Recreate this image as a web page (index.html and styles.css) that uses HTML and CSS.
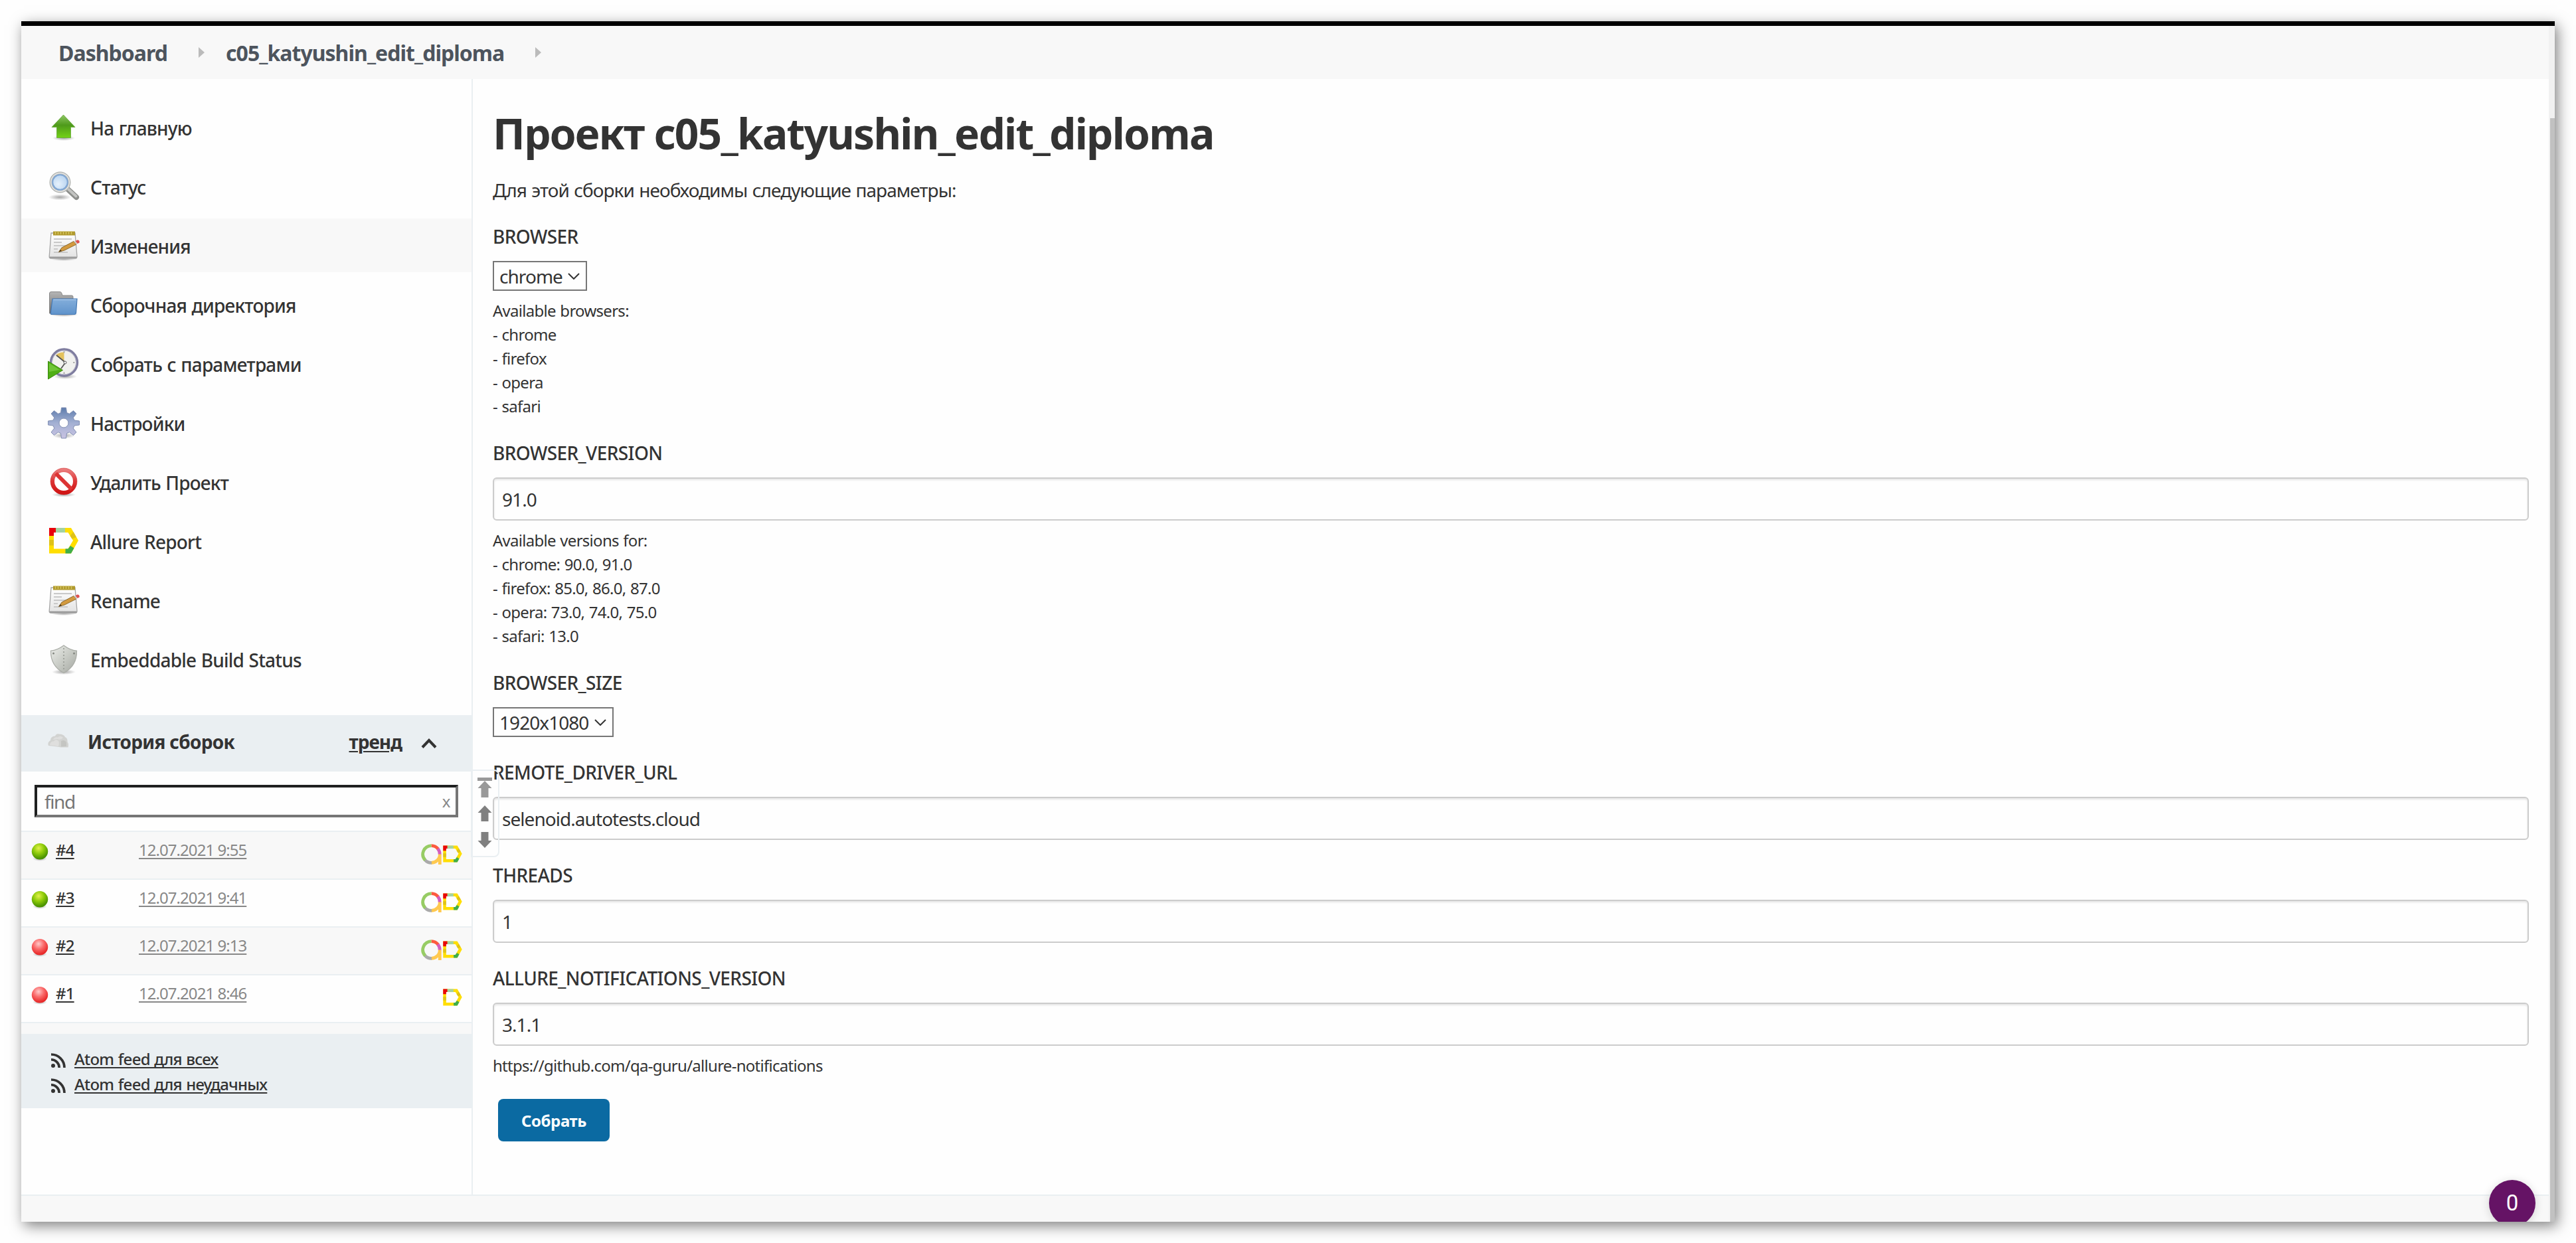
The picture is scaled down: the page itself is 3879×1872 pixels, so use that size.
FILE: index.html
```html
<!DOCTYPE html>
<html lang="ru">
<head>
<meta charset="utf-8">
<title>c05_katyushin_edit_diploma</title>
<link rel="stylesheet" href="styles.css">
</head>
<body>
<svg class="sprite" aria-hidden="true">
  <defs>
    <linearGradient id="g-green" x1="0" y1="0" x2="0" y2="1"><stop offset="0" stop-color="#8fc765"/><stop offset=".45" stop-color="#4e9a1a"/><stop offset="1" stop-color="#73d216"/></linearGradient>
    <linearGradient id="g-blue" x1="0" y1="0" x2="0" y2="1"><stop offset="0" stop-color="#84aedb"/><stop offset="1" stop-color="#5f93cb"/></linearGradient>
    <linearGradient id="g-gray" x1="0" y1="0" x2="0" y2="1"><stop offset="0" stop-color="#b5b5b5"/><stop offset="1" stop-color="#6c6c6c"/></linearGradient>
    <linearGradient id="g-paper" x1="0" y1="0" x2="0" y2="1"><stop offset="0" stop-color="#ffffff"/><stop offset="1" stop-color="#e2e2e2"/></linearGradient>
    <linearGradient id="g-gear" x1="0" y1="0" x2="0" y2="1"><stop offset="0" stop-color="#5c7bab"/><stop offset=".5" stop-color="#a3b0d3"/><stop offset="1" stop-color="#c9c3e2"/></linearGradient>
    <linearGradient id="g-stop" x1="0" y1="0" x2="0" y2="1"><stop offset="0" stop-color="#ea7a7a"/><stop offset=".5" stop-color="#dc3535"/><stop offset="1" stop-color="#d01515"/></linearGradient>
    <linearGradient id="g-shield" x1="0" y1="0" x2="1" y2="1"><stop offset="0" stop-color="#eceeea"/><stop offset=".5" stop-color="#c9ccc6"/><stop offset="1" stop-color="#a3a6a0"/></linearGradient>
    <radialGradient id="g-lens" cx=".4" cy=".6" r=".7"><stop offset="0" stop-color="#e6f1fc"/><stop offset="1" stop-color="#a9caec"/></radialGradient>
    <radialGradient id="g-ok" cx=".42" cy=".3" r=".65"><stop offset="0" stop-color="#e2f04c"/><stop offset=".5" stop-color="#8fcc0a"/><stop offset="1" stop-color="#4a9200"/></radialGradient>
    <radialGradient id="g-fail" cx=".42" cy=".3" r=".65"><stop offset="0" stop-color="#ffc9c9"/><stop offset=".5" stop-color="#fa6b6b"/><stop offset="1" stop-color="#e82a2a"/></radialGradient>
    <radialGradient id="g-shadow"><stop offset="0" stop-color="#000" stop-opacity=".35"/><stop offset="1" stop-color="#000" stop-opacity="0"/></radialGradient>
  </defs>
  <symbol id="i-up" viewBox="0 0 48 48">
    <ellipse cx="24" cy="40" rx="17" ry="4" fill="url(#g-shadow)"/>
    <path d="M23.500 5 41 23.500H34.500V39.500H13.500V23.500H6Z" fill="url(#g-green)" stroke="#5aa02c" stroke-width="1" stroke-opacity=".7"/>
  </symbol>
  <symbol id="i-search" viewBox="0 0 48 48">
    <ellipse cx="18" cy="40" rx="17" ry="4.500" fill="url(#g-shadow)"/>
    <path d="M29 27 43 40" stroke="#8d8f8c" stroke-width="8" stroke-linecap="round"/>
    <path d="M30 27 42.500 38.500" stroke="#c3c4c2" stroke-width="4" stroke-linecap="round"/>
    <circle cx="18.500" cy="17.500" r="14" fill="url(#g-lens)" stroke="#b4b6b3" stroke-width="4"/>
    <circle cx="18.500" cy="17.500" r="13.800" fill="none" stroke="#e8e8e6" stroke-width="1.500"/>
    <circle cx="18.500" cy="17.500" r="11.300" fill="none" stroke="#7fa6d4" stroke-width="2"/>
  </symbol>
  <symbol id="i-notepad" viewBox="0 0 48 48">
    <ellipse cx="24" cy="44" rx="20" ry="3" fill="url(#g-shadow)"/>
    <path d="M5 5H41L44 40Q44 43 42 43H4Q2 43 2.200 40Z" fill="url(#g-paper)" stroke="#a5a5a5" stroke-width="1.300"/>
    <path d="M2.500 40.500H43.500V43H3Z" fill="#9c9c9c"/>
    <path d="M8 2.500H41V8.500H8Z" fill="#b19a2e"/>
    <path d="M11.500 2V7M15.500 2V7M19.500 2V7M23.500 2V7M27.500 2V7M31.500 2V7M35.500 2V7" stroke="#d6c765" stroke-width="1.300"/>
    <path d="M9 14H36M9 19H21M9 24H33M9 29H15M9 34H30" stroke="#c9c9c9" stroke-width="1.800"/>
    <path d="M16.500 33.500 21 27 39 17.500 43 22 25 31Z" fill="#d39a3f" stroke="#8c6a2c" stroke-width="1"/>
    <path d="M16.500 33.500 19 30 21 32Z" fill="#4b3a22"/>
    <path d="M41.500 17 44.500 21 47.500 19.500Q48.500 16 45 15.300Z" fill="#df5050"/>
    <path d="M39.300 17.800 42.800 22 44.500 21 41.500 17Z" fill="#c9c9c9"/>
  </symbol>
  <symbol id="i-folder" viewBox="0 0 48 48">
    <ellipse cx="24" cy="39" rx="22" ry="3" fill="url(#g-shadow)"/>
    <path d="M2.500 37V7Q2.500 4.500 5 4.500H18Q20.500 4.500 21 7L22 10H36Q38 10 38 12V37Z" fill="url(#g-gray)" stroke="#888" stroke-width="1"/>
    <path d="M7 15H44L42.500 36Q42.300 38.500 40 38.500H6Q4 38.500 4.400 36Z" fill="url(#g-blue)" stroke="#4478b4" stroke-width="1.200"/>
    <path d="M8.300 16.500H42.500" stroke="#b4d0ee" stroke-width="1"/>
  </symbol>
  <symbol id="i-clock" viewBox="0 0 48 48">
    <ellipse cx="26" cy="43" rx="18" ry="4" fill="url(#g-shadow)"/>
    <circle cx="24.500" cy="22" r="19.700" fill="#f1f1ee" stroke="#7f7d9f" stroke-width="4"/>
    <circle cx="24.500" cy="22" r="18" fill="none" stroke="#c9c8d6" stroke-width="1"/>
    <path d="M12 11Q17 6 24.500 6.500V20Z" fill="#e3c25d"/>
    <path d="M13 11 26.500 22 20 31" fill="none" stroke="#555" stroke-width="1.800"/>
    <circle cx="26" cy="22" r="2" fill="#fff" stroke="#555"/>
    <path d="M24.500 5V7.500M40.500 22H38M24.500 39V36.500" stroke="#999" stroke-width="1.500"/>
    <path d="M.500 20 22.500 33.500.500 47Z" fill="#4fae14" stroke="#3c8a10" stroke-width="1"/>
    <path d="M2 23 18 33 2 36Z" fill="#7dce45" opacity=".7"/>
  </symbol>
  <symbol id="i-gear" viewBox="0 0 48 48">
    <ellipse cx="24" cy="43" rx="17" ry="4.500" fill="url(#g-shadow)"/>
    <path d="M20.500 1H27.500L28.500 8.500 32.500 10.200 38.500 5.500 43 10 38.200 16 40 20 47.500 21V27L40 28 38.200 32 43 38 38.500 42.500 32.500 37.800 28.500 39.500 27.500 47H20.500L19.500 39.500 15.500 37.800 9.500 42.500 5 38 9.800 32 8 28 .500 27V21L8 20 9.800 16 5 10 9.500 5.500 15.500 10.200 19.500 8.500ZM24 17A7 7 0 1 0 24 31A7 7 0 1 0 24 17Z" fill="url(#g-gear)" fill-rule="evenodd" stroke="#8290b4" stroke-width="1" stroke-linejoin="round"/>
  </symbol>
  <symbol id="i-stop" viewBox="0 0 48 48">
    <ellipse cx="24" cy="43" rx="18" ry="3.500" fill="url(#g-shadow)"/>
    <circle cx="24" cy="23" r="17" fill="#fff" stroke="url(#g-stop)" stroke-width="6"/>
    <path d="M12 11 36 35" stroke="#dc3434" stroke-width="6"/>
    <circle cx="24" cy="23" r="20" fill="none" stroke="#c22" stroke-width=".8" opacity=".6"/>
  </symbol>
  <symbol id="i-allure" viewBox="0 0 48 48">
    <path d="M2 4H35L46 23 35 42.500H2ZM9 11V35.500H30.500L38 23 30.500 11Z" fill="#ffde00" fill-rule="evenodd"/>
    <path d="M2 4H12V11H9V16H2Z" fill="#e8000b"/>
    <path d="M12 4H26V11H12Z" fill="#a3d3a1"/>
    <path d="M33.500 16 38.500 10 43 18 36.500 20.500Z" fill="#dfc219"/>
    <path d="M2 22H9V30.500H2Z" fill="#dfc219"/>
    <path d="M26.500 35.500H30.500L34 31 39.500 34.500 35 42.500H26.500Z" fill="#3fae49"/>
  </symbol>
  <symbol id="i-testops" viewBox="0 0 30 30">
    <g fill="none" stroke-width="4.600">
      <path d="M15 2.500A12.500 12.500 0 0 1 25 7.500" stroke="#fd5a3e"/>
      <path d="M24.500 7A12.500 12.500 0 0 1 27.300 15.500" stroke="#d35ebe"/>
      <path d="M27.400 15V30M27.400 15A12.500 12.500 0 0 1 14.500 27.500" stroke="#ffc94f"/>
      <path d="M15.500 27.500A12.500 12.500 0 0 1 5.500 23" stroke="#aaa"/>
      <path d="M6 23.500A12.500 12.500 0 0 1 15 2.500" stroke="#97cc64"/>
    </g>
  </symbol>
  <symbol id="i-shield" viewBox="0 0 48 48">
    <ellipse cx="24" cy="43" rx="18" ry="4" fill="url(#g-shadow)"/>
    <path d="M24 3Q34 10.500 43.500 11 44 34 24 44.500 4 34 4.500 11 14 10.500 24 3Z" fill="url(#g-shield)" stroke="#a9aca6" stroke-width="1.200"/>
    <path d="M24 7V41" stroke="#969993" stroke-width="1.600" stroke-dasharray="2 3"/>
    <circle cx="8.500" cy="15" r="1.500" fill="#858882"/><circle cx="39.500" cy="15" r="1.500" fill="#858882"/>
  </symbol>
  <symbol id="i-weather" viewBox="0 0 32 24">
    <path d="M1 19Q-1 14 4 11 4 5 11 4.500 13 0 17 1.500 24 1.500 26 6 30 8 29.500 13 32 17 30.500 21.500L20 21.500 10 20 1 19Z" fill="#d2d3d1"/>
    <path d="M3 18Q4 12 9 12.500 11 9 15 11 18 13 16 20Q10 19 3 18Z" fill="#dfdfde"/>
    <path d="M8 10Q10 5.500 15 6.500 19 3 23 7 20 11 14 9Z" fill="#dededd"/>
    <path d="M20 20.500V12Q25 9 28 14V20Z" fill="#c4c5c2"/>
  </symbol>
  <symbol id="i-ok" viewBox="0 0 26 28"><ellipse cx="13" cy="24" rx="11" ry="4" fill="url(#g-shadow)"/><circle cx="13" cy="13.300" r="12.200" fill="url(#g-ok)"/></symbol>
  <symbol id="i-fail" viewBox="0 0 26 28"><ellipse cx="13" cy="24" rx="11" ry="4" fill="url(#g-shadow)"/><circle cx="13" cy="13.300" r="12.200" fill="url(#g-fail)"/></symbol>
  <symbol id="i-rss" viewBox="0 0 22 22">
    <circle cx="3" cy="19" r="3" fill="#333"/>
    <path d="M0 9.800A12.200 12.200 0 0 1 12.200 22M0 2A20 20 0 0 1 20 22" fill="none" stroke="#333" stroke-width="3.600"/>
  </symbol>
  <symbol id="i-move" viewBox="0 0 22 24"><path d="M11 0 21.500 11H16.500V24H5.500V11H.500Z"/></symbol>
</svg>

<div class="window">
  <nav class="breadcrumbs">
    <a>Dashboard</a><svg class="sep first" viewBox="0 0 9 16"><path d="M0 0 9 8 0 16Z" fill="#bbb"/></svg>
    <a>c05_katyushin_edit_diploma</a><svg class="sep" viewBox="0 0 9 16"><path d="M0 0 9 8 0 16Z" fill="#bbb"/></svg>
  </nav>

  <div class="page">
    <aside class="side">
      <ul class="tasks">
        <li><svg><use href="#i-up"/></svg><a>На главную</a></li>
        <li><svg><use href="#i-search"/></svg><a>Статус</a></li>
        <li class="active"><svg><use href="#i-notepad"/></svg><a>Изменения</a></li>
        <li><svg><use href="#i-folder"/></svg><a>Сборочная директория</a></li>
        <li><svg><use href="#i-clock"/></svg><a>Собрать с параметрами</a></li>
        <li><svg><use href="#i-gear"/></svg><a>Настройки</a></li>
        <li><svg><use href="#i-stop"/></svg><a>Удалить Проект</a></li>
        <li><svg><use href="#i-allure"/></svg><a>Allure Report</a></li>
        <li><svg><use href="#i-notepad"/></svg><a>Rename</a></li>
        <li><svg><use href="#i-shield"/></svg><a>Embeddable Build Status</a></li>
      </ul>

      <section class="history">
        <header class="history-head">
          <svg class="weather"><use href="#i-weather"/></svg>
          <h2>История сборок</h2>
          <a class="trend">тренд</a>
          <svg class="collapse" viewBox="0 0 24 15"><path d="M2 13.500 12 3 22 13.500" fill="none" stroke="#333" stroke-width="4"/></svg>
        </header>
        <div class="find"><span>find</span><span class="clear">x</span></div>
        <ul class="builds">
          <li><svg class="ball"><use href="#i-ok"/></svg><a class="num">#4</a><a class="date">12.07.2021 9:55</a><span class="badges"><svg><use href="#i-testops"/></svg><svg><use href="#i-allure"/></svg></span></li>
          <li><svg class="ball"><use href="#i-ok"/></svg><a class="num">#3</a><a class="date">12.07.2021 9:41</a><span class="badges"><svg><use href="#i-testops"/></svg><svg><use href="#i-allure"/></svg></span></li>
          <li><svg class="ball"><use href="#i-fail"/></svg><a class="num">#2</a><a class="date">12.07.2021 9:13</a><span class="badges"><svg><use href="#i-testops"/></svg><svg><use href="#i-allure"/></svg></span></li>
          <li><svg class="ball"><use href="#i-fail"/></svg><a class="num">#1</a><a class="date">12.07.2021 8:46</a><span class="badges"><svg><use href="#i-allure"/></svg></span></li>
        </ul>
        <div class="feeds">
          <p><svg><use href="#i-rss"/></svg><a>Atom feed для всех</a></p>
          <p><svg><use href="#i-rss"/></svg><a>Atom feed для неудачных</a></p>
        </div>
        <div class="pager">
          <svg class="oldest" viewBox="0 0 22 30"><path d="M0 0H22V5H0ZM11 5 21.500 16H16.500V30H5.500V16H.500Z"/></svg>
          <svg><use href="#i-move"/></svg>
          <svg class="down"><use href="#i-move"/></svg>
        </div>
      </section>
    </aside>

    <main class="main">
      <h1>Проект c05_katyushin_edit_diploma</h1>
      <p class="intro">Для этой сборки необходимы следующие параметры:</p>

      <div class="param">
        <div class="name">BROWSER</div>
        <div class="select">chrome<svg viewBox="0 0 18 10"><path d="M1 1 9 9 17 1" fill="none" stroke="#333" stroke-width="2"/></svg></div>
        <div class="help">Available browsers:<br>- chrome<br>- firefox<br>- opera<br>- safari</div>
      </div>
      <div class="param">
        <div class="name">BROWSER_VERSION</div>
        <div class="field">91.0</div>
        <div class="help">Available versions for:<br>- chrome: 90.0, 91.0<br>- firefox: 85.0, 86.0, 87.0<br>- opera: 73.0, 74.0, 75.0<br>- safari: 13.0</div>
      </div>
      <div class="param">
        <div class="name">BROWSER_SIZE</div>
        <div class="select wide">1920x1080<svg viewBox="0 0 18 10"><path d="M1 1 9 9 17 1" fill="none" stroke="#333" stroke-width="2"/></svg></div>
      </div>
      <div class="param">
        <div class="name">REMOTE_DRIVER_URL</div>
        <div class="field">selenoid.autotests.cloud</div>
      </div>
      <div class="param">
        <div class="name">THREADS</div>
        <div class="field">1</div>
      </div>
      <div class="param">
        <div class="name">ALLURE_NOTIFICATIONS_VERSION</div>
        <div class="field">3.1.1</div>
        <div class="help">https://github.com/qa-guru/allure-notifications</div>
      </div>
      <button class="build" type="button">Собрать</button>
    </main>
  </div>

  <footer class="footer"></footer>
  <div class="scrollbar"><div class="thumb"></div></div>
  <div class="counter">0</div>
</div>
</body>
</html>
```
FILE: styles.css
```css
* { box-sizing: border-box; margin: 0; padding: 0; }

body {
  height: 1872px;
  padding: 32px;
  overflow: hidden;
  background: #fefefe;
  color: #333;
  font: 400 28px/36px "Noto Sans", "Open Sans", sans-serif;
}

ul { list-style: none; }
svg { display: block; flex: none; }
.sprite { position: absolute; width: 0; height: 0; }

.window {
  position: relative;
  display: flex;
  flex-direction: column;
  width: 3815px;
  height: 1808px;
  border-top: 7px solid #000;
  background: #fefefe;
  box-shadow: 4px 6px 20px rgba(0, 0, 0, .5);
}

/* Breadcrumbs */
.breadcrumbs {
  display: flex;
  align-items: center;
  height: 80px;
  padding-left: 56px;
  background: #f8f8f8;
  color: #4d545d;
  font-size: 32px;
  font-weight: 700;
  letter-spacing: -.97px;
}
.breadcrumbs a { padding-top: 2px; }
.breadcrumbs .sep { width: 9px; height: 16px; margin-left: 47px; }
.breadcrumbs .sep.first { margin-right: 32px; }

.page { display: flex; height: 1680px; }

/* Sidebar */
.side {
  width: 680px;
  padding-top: 32px;
  border-right: 2px solid #eaeff2;
  flex: none;
}
.tasks { display: grid; gap: 8px; }
.tasks li {
  display: flex;
  align-items: center;
  gap: 16px;
  height: 81px;
  padding-left: 40px;
  font-weight: 500;
  letter-spacing: -.8px;
  word-spacing: 1px;
}
.tasks a { padding-top: 2px; }
.tasks svg { width: 48px; height: 48px; }
.tasks .active { background: #f8f8f8; }

.history { position: relative; margin-top: 44px; }
.history-head {
  display: flex;
  align-items: center;
  height: 85px;
  margin-right: -2px;
  padding: 0 54px 7px 40px;
  background: #eaeff2;
}
.weather { width: 32px; height: 24px; }
.history-head h2 { margin: 1px 0 0 28px; font-size: 28px; letter-spacing: -.7px; }
.trend { margin: 1px 1px 0 auto; font-weight: 700; letter-spacing: -1px; text-decoration: underline; text-decoration-thickness: 2px; text-underline-offset: 3px; }
.collapse { width: 24px; height: 15px; margin: 7px 0 0 28px; }

.find {
  display: flex;
  justify-content: space-between;
  align-items: center;
  height: 49px;
  margin: 20px 20px 20px 20px;
  padding: 0 9px 0 11px;
  border: 4px solid;
  border-color: #1f2020 #767676 #767676 #1f2020;
  color: #757575;
  letter-spacing: -1.4px;
}
.find span { padding-top: 1px; }
.find .clear { font-size: 24px; color: #888; }

.builds li {
  display: flex;
  align-items: center;
  height: 72px;
  padding: 0 13px 18px 15px;
  border-top: 2px solid #eaeff2;
  font-size: 24px;
}
.builds li:nth-child(odd) { background: #f8f8f8; }
.ball { width: 26px; height: 28px; margin-top: 7px; }
.num { width: 125px; margin: 1px 0 0 11px; font-weight: 500; letter-spacing: -.8px; text-decoration: underline; text-decoration-thickness: 2px; text-underline-offset: 3px; }
.date { margin-top: 1px; color: #888; letter-spacing: -.95px; text-decoration: underline; text-decoration-thickness: 2px; text-underline-offset: 3px; }
.badges { display: flex; align-items: center; gap: 1px; margin: 15px 0 0 auto; }
.badges svg { width: 31px; height: 31px; }

.feeds {
  height: 130px;
  padding: 35px 0 0 45px;
  border-top: 2px solid #eaeff2;
  background: linear-gradient(#f8f8f8 16px, #eaeff2 16px);
}
.feeds p {
  display: flex;
  align-items: center;
  height: 38px;
  gap: 13px;
  font-size: 24px;
  font-weight: 500;
  letter-spacing: -.75px;
  word-spacing: 1px;
}
.feeds a { text-decoration: underline; text-decoration-thickness: 2px; text-underline-offset: 3px; }
.feeds svg { width: 22px; height: 22px; margin-top: 4px; }

/* Paging handle that hangs over the form */
.pager {
  position: absolute;
  top: 82px;
  left: 677px;
  display: flex;
  flex-direction: column;
  align-items: center;
  width: 43px;
  height: 132px;
  padding: 10px 2px 0 0;
  border: 2px solid #eaeff2;
  border-radius: 0 8px 8px 0;
  fill: #808080;
}
.pager svg { width: 22px; height: 24px; margin-bottom: 16px; }
.pager .oldest { height: 30px; margin-bottom: 12px; fill: #999; }
.pager .down { transform: rotate(180deg); }

/* Parameter form */
.main { width: 3126px; padding: 42px 30px 0; }
h1 { font-size: 64px; line-height: 80px; letter-spacing: -1.77px; }
.intro { margin: 27px 0 34px; letter-spacing: -.95px; word-spacing: 1px; }
.param { margin-bottom: 35px; }
.name { margin-bottom: 19px; font-weight: 500; letter-spacing: -.6px; }
.select {
  display: flex;
  align-items: center;
  justify-content: space-between;
  width: 142px;
  height: 45px;
  padding: 1px 9px 0 8px;
  border: 2px solid #767676;
  letter-spacing: -.95px;
}
.select.wide { width: 182px; }
.select svg { width: 18px; height: 10px; margin-bottom: 1px; }
.field {
  height: 65px;
  padding: 13px 12px;
  border: 2px solid #ccc;
  border-radius: 6px;
  box-shadow: inset 0 2px 3px rgba(0, 0, 0, .1);
  letter-spacing: -.95px;
}
.help { margin: 12px 0 -1px; font-size: 24px; letter-spacing: -.72px; word-spacing: 1px; }
.build {
  display: block;
  width: 168px;
  height: 64px;
  margin: -3px 0 0 8px;
  padding-top: 1px;
  border: 0;
  border-radius: 8px;
  background: #0b6aa2;
  color: #fff;
  font: 700 24px/61px "Noto Sans", sans-serif;
  letter-spacing: -.45px;
}

.footer { height: 41px; width: 3806px; border-top: 2px solid #eaeff2; background: #f8f8f8; }

/* Window overlays */
.scrollbar { position: absolute; top: 0; right: 0; width: 9px; height: 1801px; padding: 139px 0 0 2px; background: #f1f1f1; }
.thumb { height: 100%; background: #c1c1c1; }
.counter {
  position: absolute;
  top: 1738px;
  left: 3716px;
  width: 70px;
  height: 70px;
  border-radius: 50%;
  background: #651365;
  box-shadow: 0 2px 14px rgba(0, 0, 0, .15);
  clip-path: inset(-30px -30px 7px -30px);
  color: #fff;
  font: 400 33px/70px Roboto, sans-serif;
  text-align: center;
}
```
